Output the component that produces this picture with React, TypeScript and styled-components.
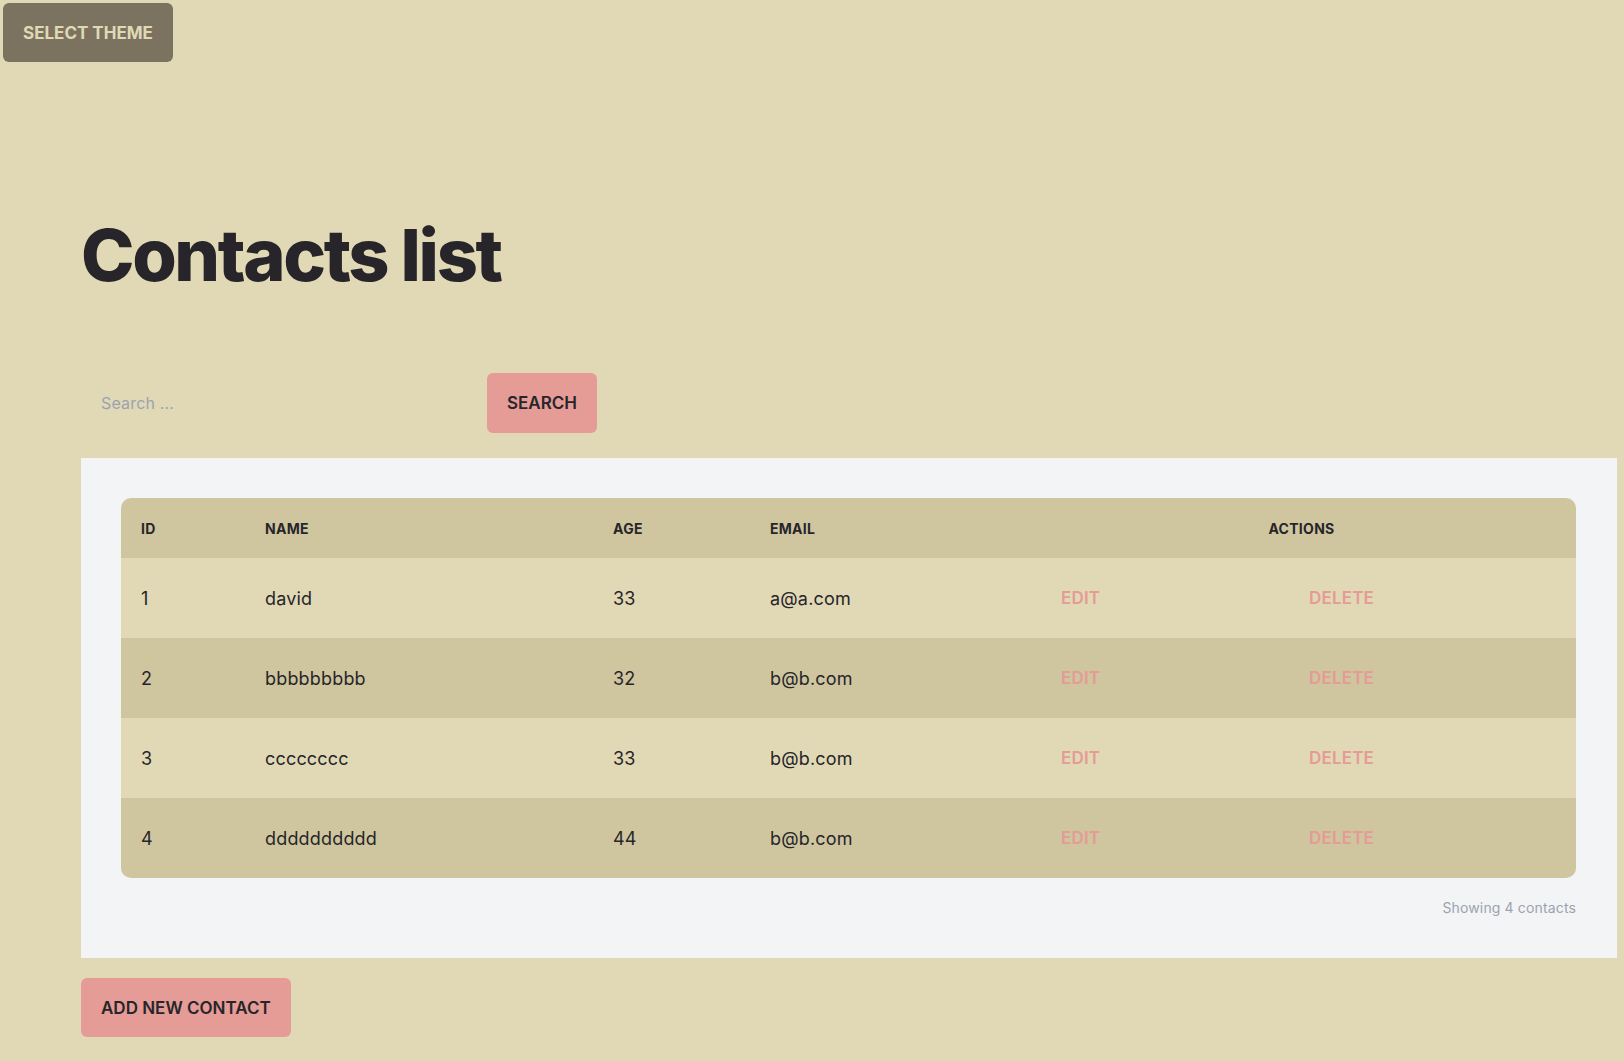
import React from "react";
import styled, { createGlobalStyle } from "styled-components";

const GlobalStyle = createGlobalStyle`
  html, body {
    margin: 0;
    padding: 0;
    background: #e1d9b5;
    font-family: Inter, "Noto Sans", "Liberation Sans", sans-serif;
    color: #27252a;
  }
  * { box-sizing: border-box; }
`;

const TopBar = styled.div`
  padding: 3px;
  display: flex;
`;

const ThemeButton = styled.button`
  height: 59px;
  padding: 0 20px;
  border: none;
  border-radius: 6px;
  background: #7b7360;
  color: #e1d9b5;
  font-family: inherit;
  font-size: 17px;
  font-weight: 700;
  text-transform: uppercase;
  cursor: pointer;
`;

const Main = styled.main`
  padding: 0 7px 24px 81px;
  display: flex;
  flex-direction: column;
  align-items: flex-start;
`;

const Heading = styled.h1`
  margin: 154px 0 0;
  font-size: 72px;
  line-height: 1;
  font-weight: 800;
  letter-spacing: -0.033em;
  color: #27252a;
`;

const SearchRow = styled.form`
  margin-top: 82px;
  display: flex;
  align-items: center;
`;

const SearchInput = styled.input`
  width: 406px;
  height: 60px;
  padding: 0 20px;
  border: none;
  background: transparent;
  font-family: inherit;
  font-size: 16px;
  letter-spacing: 0.01em;
  color: #27252a;
  outline: none;
  &::placeholder { color: #9ca3af; }
`;

const PinkButton = styled.button`
  height: 60px;
  padding: 0 20px;
  border: none;
  border-radius: 6px;
  background: #e59b96;
  color: #27252a;
  font-family: inherit;
  font-size: 17px;
  font-weight: 600;
  text-transform: uppercase;
  cursor: pointer;
`;

const AddButton = styled(PinkButton)`
  margin-top: 20px;
  height: 59px;
`;

const Panel = styled.section`
  margin-top: 25px;
  align-self: stretch;
  background: #f3f4f6;
  padding: 40px 41px 40px 40px;
`;

const Table = styled.div`
  display: grid;
  grid-template-columns: 124px 348px 157px 291px 248px 1fr;
  border-radius: 10px;
  overflow: hidden;
`;

const HeadCell = styled.div<{ $span?: number; $center?: boolean }>`
  height: 60px;
  display: flex;
  align-items: center;
  justify-content: ${(p) => (p.$center ? "center" : "flex-start")};
  padding: ${(p) => (p.$center ? "0 14px 0 0" : "0 20px")};
  grid-column: span ${(p) => p.$span ?? 1};
  background: #cfc59f;
  font-size: 14px;
  font-weight: 700;
  letter-spacing: 0.02em;
  text-transform: uppercase;
  color: #27252a;
`;

const Cell = styled.div<{ $dark: boolean }>`
  height: 80px;
  display: flex;
  align-items: center;
  padding: 0 20px;
  background: ${(p) => (p.$dark ? "#cfc59f" : "#e1d9b5")};
  font-size: 18px;
  letter-spacing: 0.01em;
  color: #27252a;
`;

const ActionLink = styled.a`
  color: #e59b96;
  font-size: 17px;
  font-weight: 600;
  text-transform: uppercase;
  text-decoration: none;
  cursor: pointer;
`;

const Footer = styled.div`
  margin-top: 20px;
  text-align: right;
  font-size: 14px;
  line-height: 20px;
  letter-spacing: 0.01em;
  color: #9ca3af;
`;

const contacts = [
  { id: 1, name: "david", age: 33, email: "a@a.com" },
  { id: 2, name: "bbbbbbbbb", age: 32, email: "b@b.com" },
  { id: 3, name: "cccccccc", age: 33, email: "b@b.com" },
  { id: 4, name: "dddddddddd", age: 44, email: "b@b.com" },
];

export default function App() {
  return (
    <>
      <GlobalStyle />
      <TopBar>
        <ThemeButton>Select theme</ThemeButton>
      </TopBar>
      <Main>
        <Heading>Contacts list</Heading>
        <SearchRow onSubmit={(e) => e.preventDefault()}>
          <SearchInput placeholder="Search ..." />
          <PinkButton type="submit">Search</PinkButton>
        </SearchRow>
        <Panel>
          <Table>
            <HeadCell>ID</HeadCell>
            <HeadCell>Name</HeadCell>
            <HeadCell>Age</HeadCell>
            <HeadCell>Email</HeadCell>
            <HeadCell $span={2} $center>
              Actions
            </HeadCell>
            {contacts.map((c, i) => {
              const dark = i % 2 === 1;
              return (
                <React.Fragment key={c.id}>
                  <Cell $dark={dark}>{c.id}</Cell>
                  <Cell $dark={dark}>{c.name}</Cell>
                  <Cell $dark={dark}>{c.age}</Cell>
                  <Cell $dark={dark}>{c.email}</Cell>
                  <Cell $dark={dark}>
                    <ActionLink>Edit</ActionLink>
                  </Cell>
                  <Cell $dark={dark}>
                    <ActionLink>Delete</ActionLink>
                  </Cell>
                </React.Fragment>
              );
            })}
          </Table>
          <Footer>Showing {contacts.length} contacts</Footer>
        </Panel>
        <AddButton>Add new contact</AddButton>
      </Main>
    </>
  );
}
